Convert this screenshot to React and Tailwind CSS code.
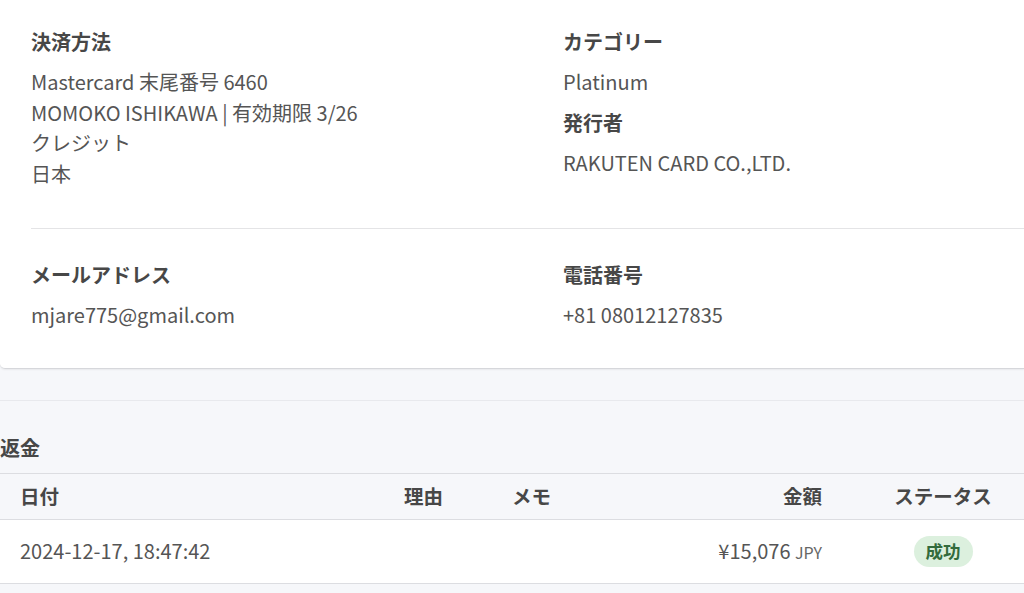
import React from 'react';

const font = "font-['Noto_Sans_CJK_JP','Noto_Sans',sans-serif]";

const Field = ({ label, children, className = '' }) => (
  <div className={className}>
    <div className="text-[20px] leading-[30px] font-bold text-[#474747]">{label}</div>
    <div className="mt-[10px] text-[20px] leading-[30.5px] text-[#555]">{children}</div>
  </div>
);

const App = () => {
  return (
    <div className={`min-h-screen bg-[#f6f7fa] ${font}`}>
      {/* Payment details card */}
      <div className="bg-white rounded-bl-[5px] border-b border-[#d6d7db] shadow-[0_1px_2px_rgba(0,0,0,0.06)]">
        <div className="ml-[31px] pt-[27px] pb-[39px] border-b border-[#e4e4e6] grid grid-cols-[532px_1fr]">
          <Field label="決済方法">
            <div>Mastercard 末尾番号 6460</div>
            <div>MOMOKO ISHIKAWA | 有効期限 3/26</div>
            <div>クレジット</div>
            <div>日本</div>
          </Field>
          <div>
            <Field label="カテゴリー">Platinum</Field>
            <Field label="発行者" className="mt-[10px]">RAKUTEN CARD CO.,LTD.</Field>
          </div>
        </div>
        <div className="ml-[31px] pt-[31px] pb-[37px] grid grid-cols-[532px_1fr]">
          <Field label="メールアドレス">mjare775@gmail.com</Field>
          <Field label="電話番号">+81 08012127835</Field>
        </div>
      </div>

      {/* Refunds */}
      <div className="mt-[31px] border-t border-[#e8e9ed]">
        <h2 className="pt-[32px] pb-[10px] text-[20px] leading-[30px] font-bold text-[#474747]">返金</h2>
        <div className="border-t border-[#dcdde1]">
          <div className="grid grid-cols-[384px_108px_1fr_200px_162px] h-[46px] items-center bg-[#f6f7fa] border-b border-[#dcdde1] text-[19.5px] font-bold text-[#474747]">
            <div className="pl-[20px]">日付</div>
            <div className="pl-[20px]">理由</div>
            <div className="pl-[20px]">メモ</div>
            <div className="pr-[40px] text-right">金額</div>
            <div className="text-center">ステータス</div>
          </div>
          <div className="grid grid-cols-[384px_108px_1fr_200px_162px] h-[64px] items-center bg-white border-b border-[#dcdde1] text-[20px] text-[#555]">
            <div className="pl-[20px]">2024-12-17, 18:47:42</div>
            <div className="pl-[20px]"></div>
            <div className="pl-[20px]"></div>
            <div className="pr-[40px] text-right">
              ¥15,076 <span className="text-[16px] text-[#666]">JPY</span>
            </div>
            <div className="flex justify-center">
              <span className="inline-flex items-center h-[31px] px-[12px] rounded-full bg-[#dcf0de] text-[17.5px] font-bold text-[#336b3c]">成功</span>
            </div>
          </div>
        </div>
      </div>
    </div>
  );
};

export default App;
